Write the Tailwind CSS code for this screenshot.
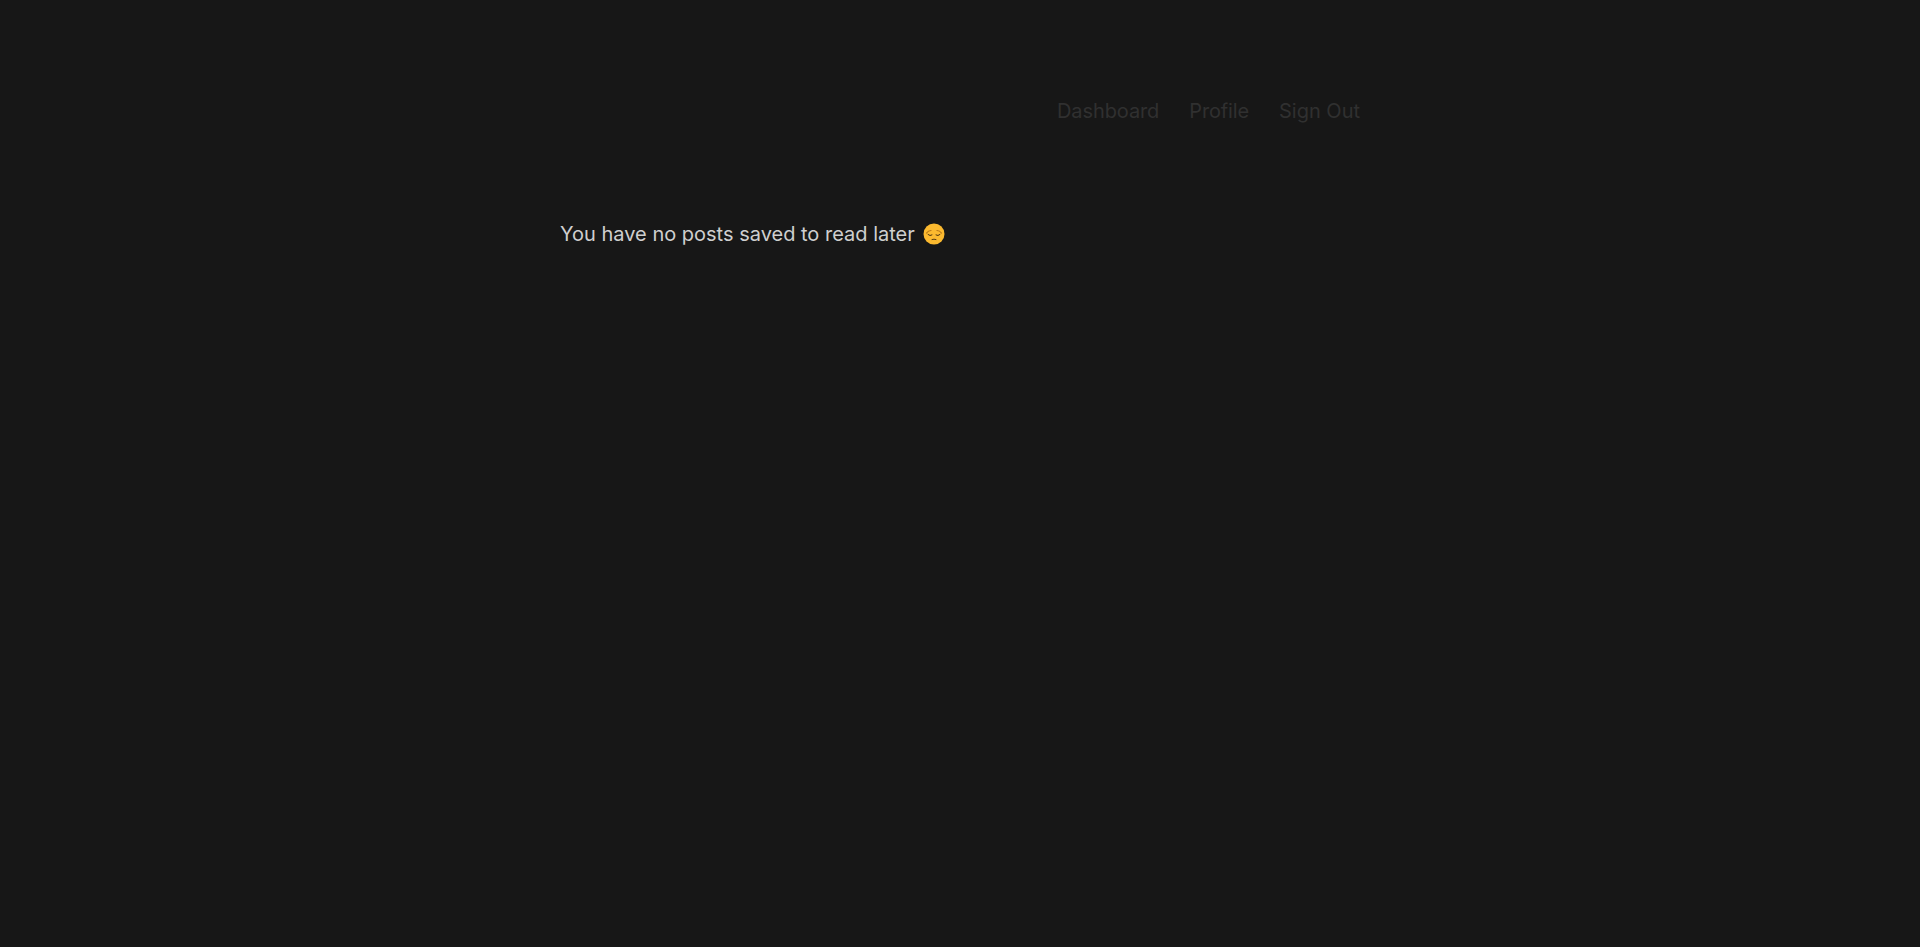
<!DOCTYPE html>
<html lang="en">
<head>
    <meta charset="UTF-8">
    <meta name="viewport" content="width=device-width, initial-scale=1.0">
    <title>Read Later</title>
    <script src="https://cdn.jsdelivr.net/npm/@tailwindcss/browser@4"></script>
</head>
<body class="bg-[#171717] min-h-screen font-['Inter',sans-serif]">
    <div class="w-[800px] mx-auto">
        <nav class="flex justify-end gap-[30px] pt-[96px] text-xl leading-[30px] text-[#303030]">
            <a href="#" class="tracking-[-0.1px]">Dashboard</a>
            <a href="#" class="tracking-[-0.15px]">Profile</a>
            <a href="#">Sign Out</a>
        </nav>
        <main class="mt-[93px] flex items-center text-xl leading-[30px] text-[#cfcfcf]">
            <p>You have no posts saved to read later</p>
            <!-- pensive face -->
            <svg class="ml-2 w-[22px] h-[22px]" viewBox="0 0 22 22" fill="none">
                <circle cx="11" cy="11" r="10.5" fill="#fbb92f"/>
                <path d="M3.5 10 Q5.5 7.5 8 7.5 M18.5 10 Q16.5 7.5 14 7.5" stroke="#b5761a" stroke-width="1.2" stroke-linecap="round"/>
                <path d="M5 11.5 Q7 13.5 9 12 M13 12 Q15 13.5 17 11.5" stroke="#4a3210" stroke-width="1" stroke-linecap="round"/>
                <path d="M9 16.5 Q11 15.8 13 16.5" stroke="#4a3210" stroke-width="0.9" stroke-linecap="round"/>
            </svg>
        </main>
    </div>
</body>
</html>
